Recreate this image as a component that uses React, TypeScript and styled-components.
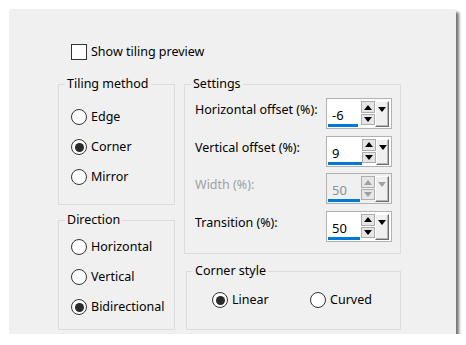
import React from 'react';
import styled, { createGlobalStyle } from 'styled-components';

const GlobalStyle = createGlobalStyle`
  html, body {
    margin: 0;
    background: #ffffff;
  }
  body {
    font-family: 'Noto Sans', 'Segoe UI', sans-serif;
    font-size: 12.5px;
    color: #000;
  }
`;

const Panel = styled.div`
  box-sizing: border-box;
  margin: 9px 0 0 9px;
  width: 447px;
  height: 325px;
  background: #f0f0f0;
  border-radius: 3px 2px 0 0;
  box-shadow: 3px 3px 3px rgba(0, 0, 0, 0.55);
  padding: 35px 0 0 49px;
`;

const CheckRow = styled.label`
  display: flex;
  align-items: center;
  gap: 4px;
  height: 16px;
  margin-left: 13px;
  line-height: 16px;
`;

const CheckBox = styled.span`
  box-sizing: border-box;
  width: 16px;
  height: 16px;
  border: 1px solid #333;
  background: #fff;
`;

const Columns = styled.div`
  display: flex;
  gap: 9px;
  margin-top: 16px;
`;

const Column = styled.div`
  display: flex;
  flex-direction: column;
`;

const Group = styled.fieldset<{ $w: number; $h: number; $ml?: number; $mt?: number }>`
  box-sizing: border-box;
  width: ${(p) => p.$w}px;
  height: ${(p) => p.$h}px;
  margin: ${(p) => p.$mt ?? 0}px 0 0 ${(p) => p.$ml ?? 0}px;
  padding: 0;
  min-width: 0;
  border: 1px solid #dcdcdc;
`;

const Legend = styled.legend`
  margin-left: 6px;
  padding: 0 2px;
  line-height: 16px;
`;

const RadioList = styled.div<{ $pt: number; $row: number }>`
  display: flex;
  flex-direction: column;
  padding: ${(p) => p.$pt}px 0 0 12px;

  & > label {
    height: ${(p) => p.$row}px;
  }
`;

const RadioRow = styled.label<{ $w?: number }>`
  display: flex;
  align-items: center;
  gap: 4px;
  line-height: 16px;
  width: ${(p) => (p.$w ? `${p.$w}px` : 'auto')};
`;

const RadioDot = styled.span<{ $on?: boolean }>`
  box-sizing: border-box;
  width: 16px;
  height: 16px;
  border-radius: 50%;
  border: 1px solid #333;
  background: #fff;
  display: flex;
  align-items: center;
  justify-content: center;

  &::after {
    content: '';
    width: 9px;
    height: 9px;
    border-radius: 50%;
    background: ${(p) => (p.$on ? '#2a2a2a' : 'transparent')};
  }
`;

const Settings = styled.div`
  display: flex;
  flex-direction: column;
  gap: 6.5px;
  padding: 6px 8px 0 10px;
`;

const SettingRow = styled.div<{ $off?: boolean }>`
  display: flex;
  justify-content: space-between;
  align-items: flex-start;
  color: ${(p) => (p.$off ? '#a0a0a0' : '#000')};

  & > span {
    margin-top: 4px;
    line-height: 16px;
  }
`;

const Spin = styled.div<{ $off?: boolean }>`
  box-sizing: border-box;
  display: flex;
  align-items: flex-start;
  width: 66px;
  height: 31px;
  padding: 1px 2px 1px 1px;
  border: 1px solid #b2b2b2;
  background: ${(p) => (p.$off ? '#f0f0f0' : '#fff')};
`;

const Field = styled.div<{ $off?: boolean }>`
  width: 34px;
  height: 27px;
  display: flex;
  flex-direction: column;
  justify-content: flex-end;
  color: ${(p) => (p.$off ? '#8a8f99' : '#000')};
  font-size: 13px;

  & > span {
    padding-left: 4px;
    line-height: 16px;
  }
`;

const Bar = styled.div<{ $w: number }>`
  width: ${(p) => p.$w}px;
  height: 3px;
  margin-top: 1px;
  background: #0078d7;
`;

const Steppers = styled.div`
  display: flex;
  flex-direction: column;
  gap: 1px;
  margin-top: 1px;
`;

const StepButton = styled.div<{ $h: number }>`
  box-sizing: border-box;
  width: 14px;
  height: ${(p) => p.$h}px;
  border: 1px solid #adadad;
  background: #e6e6e6;
  display: flex;
  align-items: center;
  justify-content: center;
`;

const DropButton = styled.div`
  box-sizing: border-box;
  width: 14px;
  height: 26px;
  margin-top: 1px;
  background: #f0f0f0;
  border-top: 1px solid #fff;
  border-left: 1px solid #fff;
  border-right: 1px solid #6d6d6d;
  border-bottom: 1px solid #6d6d6d;
  box-shadow: inset -1px -1px 0 #b5b5b5;
  display: flex;
  justify-content: center;
  padding-top: 5px;
`;

const Arrow = ({ up, color }: { up?: boolean; color: string }) => (
  <svg width="8" height="5" viewBox="0 0 8 5">
    <polygon points={up ? '0,5 8,5 4,0' : '0,0 8,0 4,5'} fill={color} />
  </svg>
);

const SpinBox = ({ value, bar, off }: { value: string; bar: number; off?: boolean }) => {
  const ink = off ? '#a0a0a0' : '#000';
  return (
    <Spin $off={off}>
      <Field $off={off}>
        <span>{value}</span>
        <Bar $w={bar} />
      </Field>
      <Steppers>
        <StepButton $h={12}>
          <Arrow up color={ink} />
        </StepButton>
        <StepButton $h={11}>
          <Arrow color={ink} />
        </StepButton>
      </Steppers>
      <DropButton>
        <Arrow color={ink} />
      </DropButton>
    </Spin>
  );
};

const CornerRow = styled.div`
  display: flex;
  padding: 13px 0 0 25px;

  & > label {
    height: 16px;
  }
`;

const Radio = ({ label, on, w }: { label: string; on?: boolean; w?: number }) => (
  <RadioRow $w={w}>
    <RadioDot $on={on} />
    {label}
  </RadioRow>
);

const App = () => {
  return (
    <>
      <GlobalStyle />
      <Panel>
        <CheckRow>
          <CheckBox />
          Show tiling preview
        </CheckRow>
        <Columns>
          <Column>
            <Group $w={117} $h={129}>
              <Legend>Tiling method</Legend>
              <RadioList $pt={10} $row={30}>
                <Radio label="Edge" />
                <Radio label="Corner" on />
                <Radio label="Mirror" />
              </RadioList>
            </Group>
            <Group $w={117} $h={118} $mt={7}>
              <Legend>Direction</Legend>
              <RadioList $pt={4} $row={30}>
                <Radio label="Horizontal" />
                <Radio label="Vertical" />
                <Radio label="Bidirectional" on />
              </RadioList>
            </Group>
          </Column>
          <Column>
            <Group $w={217} $h={178}>
              <Legend>Settings</Legend>
              <Settings>
                <SettingRow>
                  <span>Horizontal offset (%):</span>
                  <SpinBox value="-6" bar={30} />
                </SettingRow>
                <SettingRow>
                  <span>Vertical offset (%):</span>
                  <SpinBox value="9" bar={34} />
                </SettingRow>
                <SettingRow $off>
                  <span>Width (%):</span>
                  <SpinBox value="50" bar={32} off />
                </SettingRow>
                <SettingRow>
                  <span>Transition (%):</span>
                  <SpinBox value="50" bar={32} />
                </SettingRow>
              </Settings>
            </Group>
            <Group $w={215} $h={67} $ml={2} $mt={9}>
              <Legend>Corner style</Legend>
              <CornerRow>
                <Radio label="Linear" on w={98} />
                <Radio label="Curved" />
              </CornerRow>
            </Group>
          </Column>
        </Columns>
      </Panel>
    </>
  );
};

export default App;
